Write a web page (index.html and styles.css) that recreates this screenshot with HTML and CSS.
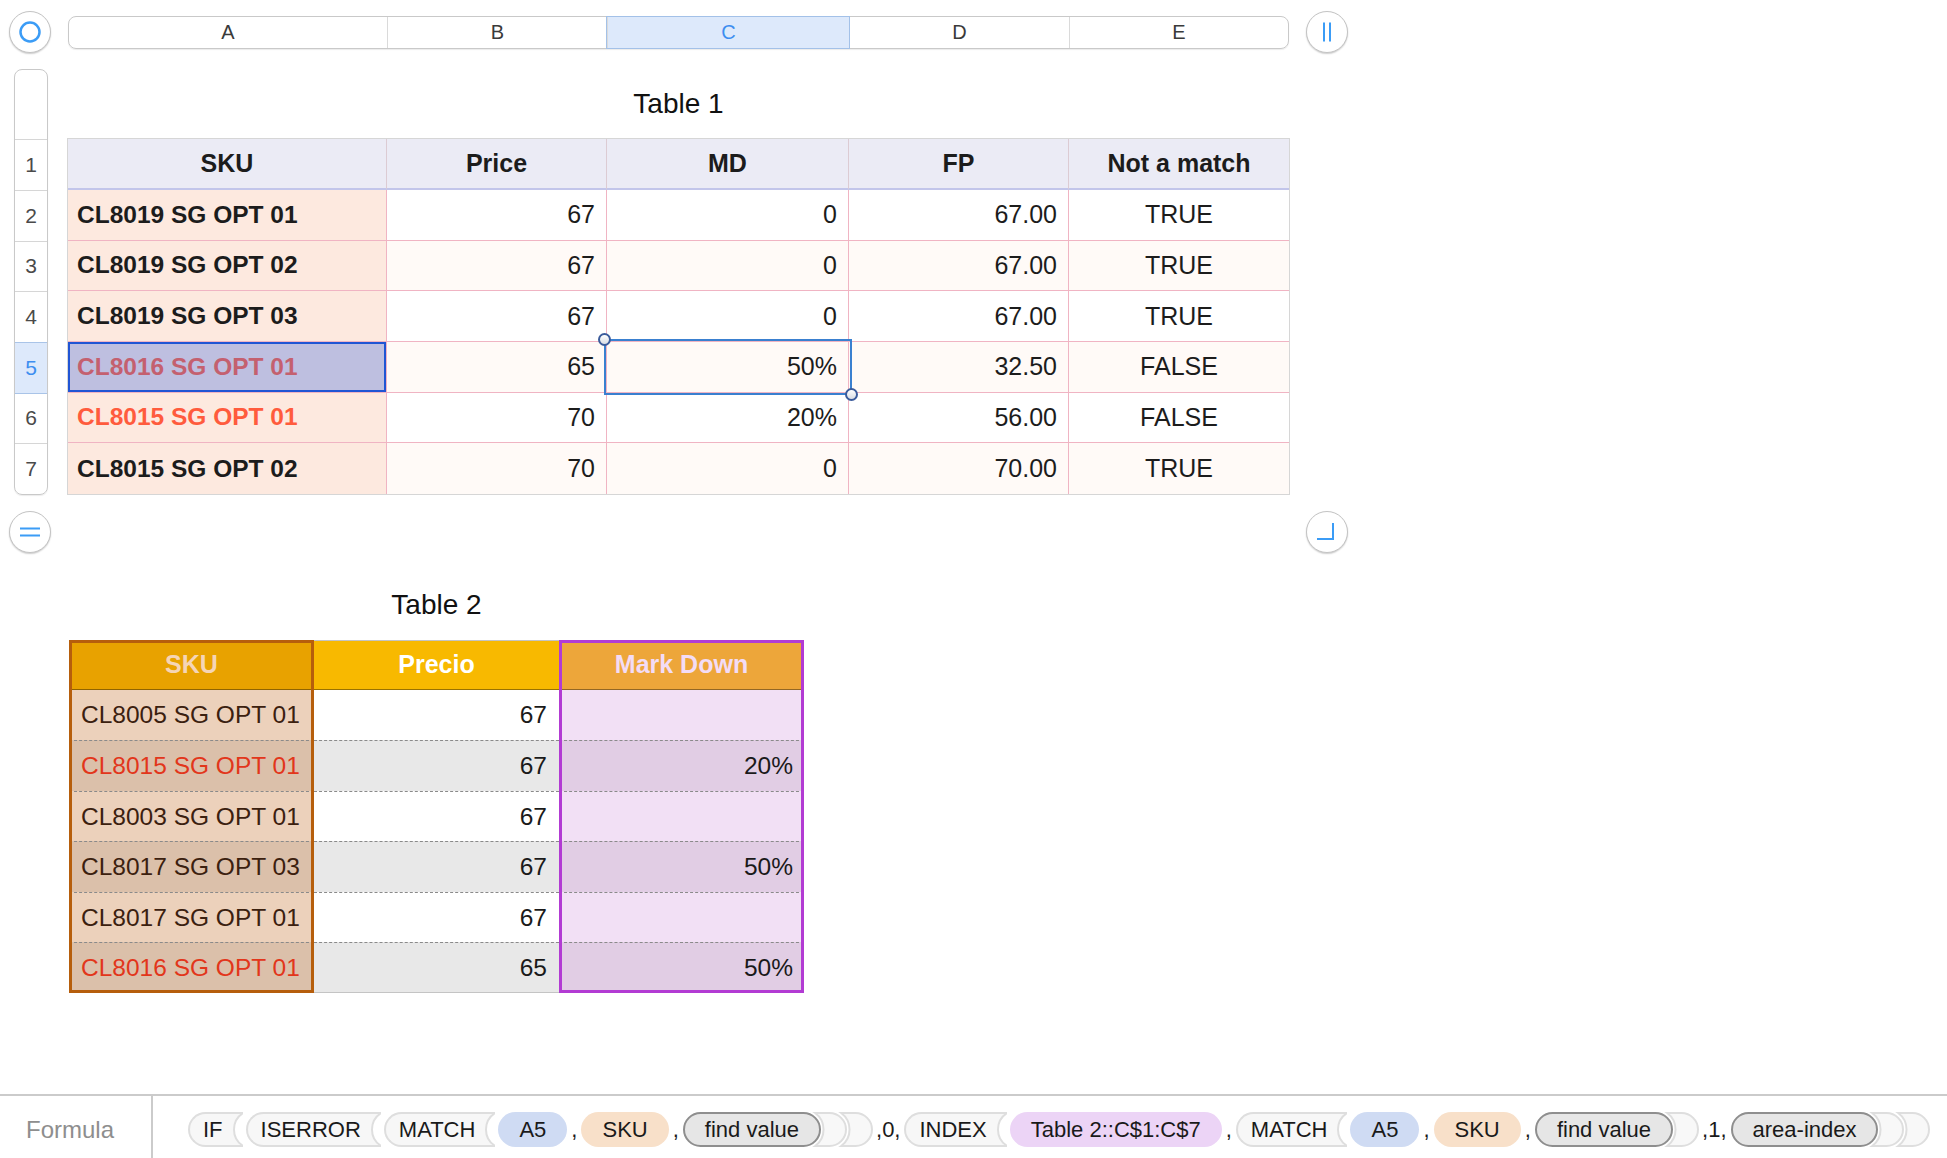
FILE: index.html
```html
<!DOCTYPE html>
<html lang="en">
<head>
<meta charset="utf-8">
<title>Numbers – Table 1</title>
<link rel="stylesheet" href="styles.css">
</head>
<body>
<div class="app">
  <div class="canvas">
    <div class="top-row">
      <div class="round-btn">
        <svg viewBox="0 0 40 40"><circle cx="20" cy="20" r="9.5" fill="none" stroke="#3b9cf6" stroke-width="2.5"/></svg>
      </div>
      <div class="col-bar">
        <div class="col-cell">A</div>
        <div class="col-cell">B</div>
        <div class="col-cell col-active">C</div>
        <div class="col-cell">D</div>
        <div class="col-cell">E</div>
      </div>
      <div class="round-btn gap-left">
        <svg viewBox="0 0 40 40"><path d="M17 10.5V29.5M23 10.5V29.5" fill="none" stroke="#3b9cf6" stroke-width="2"/></svg>
      </div>
    </div>

    <div class="sheet-row">
      <div class="row-bar">
        <div class="row-blank"></div>
        <div class="row-num row-first">1</div>
        <div class="row-num">2</div>
        <div class="row-num">3</div>
        <div class="row-num">4</div>
        <div class="row-num row-active">5</div>
        <div class="row-num row-after-active">6</div>
        <div class="row-num">7</div>
      </div>

      <div class="table1-block">
        <div class="table-title">Table 1</div>
        <div class="t1">
          <div class="c h">SKU</div>
          <div class="c h">Price</div>
          <div class="c h">MD</div>
          <div class="c h">FP</div>
          <div class="c h last">Not a match</div>

          <div class="c sku">CL8019 SG OPT 01</div>
          <div class="c num">67</div>
          <div class="c num">0</div>
          <div class="c num">67.00</div>
          <div class="c ctr last">TRUE</div>

          <div class="c sku">CL8019 SG OPT 02</div>
          <div class="c num alt">67</div>
          <div class="c num alt">0</div>
          <div class="c num alt">67.00</div>
          <div class="c ctr alt last">TRUE</div>

          <div class="c sku">CL8019 SG OPT 03</div>
          <div class="c num">67</div>
          <div class="c num">0</div>
          <div class="c num">67.00</div>
          <div class="c ctr last">TRUE</div>

          <div class="c sku sel-a">CL8016 SG OPT 01</div>
          <div class="c num alt">65</div>
          <div class="c num alt sel-c">50%
            <div class="sel-rect"><span class="handle tl"></span><span class="handle br"></span></div>
          </div>
          <div class="c num alt">32.50</div>
          <div class="c ctr alt last">FALSE</div>

          <div class="c sku coral">CL8015 SG OPT 01</div>
          <div class="c num">70</div>
          <div class="c num">20%</div>
          <div class="c num">56.00</div>
          <div class="c ctr last">FALSE</div>

          <div class="c sku bottom">CL8015 SG OPT 02</div>
          <div class="c num alt bottom">70</div>
          <div class="c num alt bottom">0</div>
          <div class="c num alt bottom">70.00</div>
          <div class="c ctr alt last bottom">TRUE</div>
        </div>
      </div>
    </div>

    <div class="mid-controls">
      <div class="round-btn">
        <svg viewBox="0 0 40 40"><path d="M10 16.5H30M10 23.5H30" fill="none" stroke="#3b9cf6" stroke-width="2"/></svg>
      </div>
      <div class="round-btn">
        <svg viewBox="0 0 40 40"><path d="M26 11V27H10" fill="none" stroke="#3b9cf6" stroke-width="2"/></svg>
      </div>
    </div>

    <div class="table2-block">
      <div class="table-title">Table 2</div>
      <div class="t2">
        <div class="t2-col sku-col">
          <div class="t2-h">SKU</div>
          <div class="t2-c first">CL8005 SG OPT 01</div>
          <div class="t2-c dark red">CL8015 SG OPT 01</div>
          <div class="t2-c">CL8003 SG OPT 01</div>
          <div class="t2-c dark">CL8017 SG OPT 03</div>
          <div class="t2-c">CL8017 SG OPT 01</div>
          <div class="t2-c dark red">CL8016 SG OPT 01</div>
        </div>
        <div class="t2-col price-col">
          <div class="t2-h">Precio</div>
          <div class="t2-c first">67</div>
          <div class="t2-c dark">67</div>
          <div class="t2-c">67</div>
          <div class="t2-c dark">67</div>
          <div class="t2-c">67</div>
          <div class="t2-c dark last">65</div>
        </div>
        <div class="t2-col md-col">
          <div class="t2-h">Mark Down</div>
          <div class="t2-c first"></div>
          <div class="t2-c dark">20%</div>
          <div class="t2-c"></div>
          <div class="t2-c dark">50%</div>
          <div class="t2-c"></div>
          <div class="t2-c dark">50%</div>
        </div>
      </div>
    </div>
  </div>

  <div class="formula-bar">
    <div class="formula-label">Formula</div>
    <div class="formula-tokens">
      <span class="fn">IF</span><svg class="tail" viewBox="0 0 20 35"><path class="tail-fill" d="M0 1H20A19.6 19.6 0 0 0 20 34H0Z"/><path class="tail-line" d="M0 1H20A19.6 19.6 0 0 0 20 34H0"/></svg>
      <span class="fn">ISERROR</span><svg class="tail" viewBox="0 0 20 35"><path class="tail-fill" d="M0 1H20A19.6 19.6 0 0 0 20 34H0Z"/><path class="tail-line" d="M0 1H20A19.6 19.6 0 0 0 20 34H0"/></svg>
      <span class="fn">MATCH</span><svg class="tail" viewBox="0 0 20 35"><path class="tail-fill" d="M0 1H20A19.6 19.6 0 0 0 20 34H0Z"/><path class="tail-line" d="M0 1H20A19.6 19.6 0 0 0 20 34H0"/></svg>
      <span class="pill ref">A5</span><span class="sep">,</span>
      <span class="pill skuref">SKU</span><span class="sep">,</span>
      <span class="pill ph">find value</span><svg class="cp" viewBox="0 0 44 35"><path d="M12.2 1H26.5A16.5 16.5 0 0 1 26.5 34H12.2A20.5 20.5 0 0 0 12.2 1Z"/></svg><svg class="cp" viewBox="0 0 44 35"><path d="M12.2 1H26.5A16.5 16.5 0 0 1 26.5 34H12.2A20.5 20.5 0 0 0 12.2 1Z"/></svg>
      <span class="sep sep-wide">,0,</span>
      <span class="fn">INDEX</span><svg class="tail" viewBox="0 0 20 35"><path class="tail-fill" d="M0 1H20A19.6 19.6 0 0 0 20 34H0Z"/><path class="tail-line" d="M0 1H20A19.6 19.6 0 0 0 20 34H0"/></svg>
      <span class="pill tbl">Table 2::C$1:C$7</span><span class="sep">,</span>
      <span class="fn">MATCH</span><svg class="tail" viewBox="0 0 20 35"><path class="tail-fill" d="M0 1H20A19.6 19.6 0 0 0 20 34H0Z"/><path class="tail-line" d="M0 1H20A19.6 19.6 0 0 0 20 34H0"/></svg>
      <span class="pill ref">A5</span><span class="sep">,</span>
      <span class="pill skuref">SKU</span><span class="sep">,</span>
      <span class="pill ph">find value</span><svg class="cp" viewBox="0 0 44 35"><path d="M12.2 1H26.5A16.5 16.5 0 0 1 26.5 34H12.2A20.5 20.5 0 0 0 12.2 1Z"/></svg>
      <span class="sep sep-wide">,1,</span>
      <span class="pill ph">area-index</span><svg class="cp" viewBox="0 0 44 35"><path d="M12.2 1H26.5A16.5 16.5 0 0 1 26.5 34H12.2A20.5 20.5 0 0 0 12.2 1Z"/></svg><svg class="cp" viewBox="0 0 44 35"><path d="M12.2 1H26.5A16.5 16.5 0 0 1 26.5 34H12.2A20.5 20.5 0 0 0 12.2 1Z"/></svg>
    </div>
  </div>
</div>
</body>
</html>
```

FILE: styles.css
```css
* { box-sizing: border-box; }

html, body {
  margin: 0;
  padding: 0;
  background: #ffffff;
}

body {
  font-family: "Liberation Sans", Arial, Helvetica, sans-serif;
  color: #1c1c1c;
  width: 1947px;
  height: 1158px;
  overflow: hidden;
}

.app {
  display: flex;
  flex-direction: column;
  height: 1158px;
}

.canvas {
  flex: 1;
  min-height: 0;
}

/* ---------- round buttons ---------- */
.round-btn {
  width: 42px;
  height: 42px;
  flex: none;
  border-radius: 50%;
  border: 1px solid #c4c4c4;
  background: #fff;
  box-shadow: 0 1px 1.5px rgba(0, 0, 0, 0.2);
  display: flex;
  align-items: center;
  justify-content: center;
}

.round-btn svg {
  width: 40px;
  height: 40px;
  display: block;
}

/* ---------- top column header bar ---------- */
.top-row {
  display: flex;
  align-items: center;
  height: 44px;
  margin-top: 10px;
  padding-left: 9px;
}

.col-bar {
  margin-left: 17px;
  width: 1221px;
  height: 33px;
  border: 1px solid #c9c9c9;
  border-radius: 8px;
  box-shadow: 0 1px 1px rgba(0, 0, 0, 0.08);
  display: grid;
  grid-template-columns: 318px 220px 242px 220px 1fr;
}

.col-cell {
  display: flex;
  align-items: center;
  justify-content: center;
  font-size: 20px;
  color: #3a3a3a;
  border-left: 1px solid #dadada;
}

.col-cell:first-child { border-left: none; }

.col-active {
  background: #dde9fb;
  color: #3d8ef0;
  box-shadow: 0 0 0 1px #a3c1e8;
  position: relative;
}

.gap-left { margin-left: 17px; }

/* ---------- row header + table 1 ---------- */
.sheet-row {
  display: flex;
  align-items: flex-start;
  margin-top: 15px;
}

.row-bar {
  margin-left: 14px;
  width: 34px;
  border: 1px solid #c9c9c9;
  border-radius: 8px;
  box-shadow: 0 1px 1px rgba(0, 0, 0, 0.08);
  overflow: hidden;
}

.row-blank { height: 69px; }

.row-num {
  height: 50.667px;
  border-top: 1px solid #d6d6d6;
  display: flex;
  align-items: center;
  justify-content: center;
  font-size: 21px;
  color: #4a4a4a;
}

.row-first { height: 51px; }

.row-active {
  background: #dde9fb;
  color: #3d8ef0;
  border-top-color: #a9c4e8;
}

.row-after-active { border-top-color: #a9c4e8; }

.table1-block {
  margin-left: 20px;
  width: 1221px;
}

.table-title {
  height: 70px;
  display: flex;
  align-items: center;
  justify-content: center;
  font-size: 28px;
  color: #111;
}

.t1 {
  display: grid;
  grid-template-columns: 319px 220px 242px 220px 220px;
  grid-template-rows: 51px repeat(6, 50.667px);
  box-shadow: 0 0 0 1px #d6d6d6;
  background: #fff;
}

.c {
  display: flex;
  align-items: center;
  font-size: 25px;
  color: #1c1c1c;
  padding: 0 11px;
  border-right: 1px solid #f0b4c3;
  border-bottom: 1px solid #f0b4c3;
  background: #ffffff;
  white-space: nowrap;
}

.c.h {
  background: #ebebf5;
  font-weight: bold;
  justify-content: center;
  border-bottom: 2px solid #c2c5ea;
  border-right-color: #dccbd3;
}

.c.last { border-right: none; }
.c.bottom { border-bottom: none; }

.c.sku {
  background: #fde9df;
  font-weight: bold;
  padding-left: 9px;
  font-size: 24.5px;
}

.c.num { justify-content: flex-end; }
.c.ctr { justify-content: center; }
.c.alt { background: #fffaf7; }

.c.sel-a {
  background: #bebfe0;
  color: #c4606f;
  box-shadow: inset 0 0 0 2px #2055d4;
}

.c.coral { color: #ff5b3d; }

.c.sel-c { position: relative; }

.sel-rect {
  position: absolute;
  left: -3px;
  top: -3px;
  right: -4px;
  bottom: -3px;
  border: 2.5px solid #3a80d0;
  z-index: 2;
}

.handle {
  position: absolute;
  width: 13px;
  height: 13px;
  border-radius: 50%;
  border: 2px solid #3b5b9b;
  background: linear-gradient(#ffffff, #d9dce3);
}

.handle.tl { left: -8px; top: -8px; }
.handle.br { right: -8px; bottom: -8px; }

/* ---------- middle controls ---------- */
.mid-controls {
  display: flex;
  justify-content: space-between;
  width: 1339px;
  margin-left: 9px;
  margin-top: 16px;
}

/* ---------- table 2 ---------- */
.table2-block {
  margin-top: 17px;
  margin-left: 69px;
  width: 735px;
}

.t2 { display: flex; }

.t2-col {
  width: 245px;
  display: flex;
  flex-direction: column;
}

.sku-col {
  outline: 3px solid #b65e0c;
  outline-offset: -3px;
}

.md-col {
  outline: 3px solid #b23bd3;
  outline-offset: -3px;
}

.t2-h {
  height: 50px;
  display: flex;
  align-items: center;
  justify-content: center;
  font-size: 25px;
  font-weight: bold;
  border-bottom: 1px solid rgba(0, 0, 0, 0.38);
}

.t2-c {
  height: 50.5px;
  display: flex;
  align-items: center;
  font-size: 24.5px;
  color: #1a1a1a;
  border-top: 1px dashed #8a8a8a;
  white-space: nowrap;
}

.t2-c.first { border-top: none; }

.sku-col .t2-h { background: #e8a200; color: #f5d5b6; }
.sku-col .t2-c { background: #ecd1bb; color: #3b200f; padding-left: 12px; }
.sku-col .t2-c.dark { background: #dbc0aa; }
.sku-col .t2-c.red { color: #e2361b; }

.price-col .t2-h {
  background: #f8b900;
  color: #ffffff;
  box-shadow: inset 0 1px 0 #c4c4c4;
}
.price-col .t2-c { background: #ffffff; justify-content: flex-end; padding-right: 12px; }
.price-col .t2-c.dark { background: #e8e8e8; }
.price-col .t2-c.last { box-shadow: inset 0 -1px 0 #c4c4c4; }

.md-col .t2-h { background: #eda63a; color: #f3dcf6; }
.md-col .t2-c { background: #f2e0f5; justify-content: flex-end; padding-right: 11px; }
.md-col .t2-c.dark { background: #e1cde4; }

/* ---------- formula bar ---------- */
.formula-bar {
  height: 64px;
  flex: none;
  border-top: 2px solid #cbcbcb;
  display: flex;
}

.formula-label {
  width: 153px;
  flex: none;
  border-right: 2px solid #cbcbcb;
  font-size: 24px;
  color: #8e8e8e;
  padding-left: 26px;
  padding-top: 20px;
}

.formula-tokens {
  display: flex;
  align-items: center;
  height: 35px;
  margin-top: 16px;
  padding-left: 35px;
  font-size: 22px;
  color: #1a1a1a;
  white-space: nowrap;
}

.fn {
  height: 35px;
  display: flex;
  align-items: center;
  flex: none;
  background: #f7f7f7;
  border: 2px solid #dedede;
  border-right: none;
  border-radius: 18px 0 0 18px;
  padding-left: 13px;
}

.tail {
  width: 20px;
  height: 35px;
  flex: none;
  display: block;
  margin-right: 3px;
}

.tail-fill { fill: #f7f7f7; }
.tail-line { fill: none; stroke: #dedede; stroke-width: 2; }

.pill {
  height: 35px;
  display: flex;
  align-items: center;
  flex: none;
  border-radius: 18px;
  padding: 0 21px;
}

.ref { background: #cfdbf3; }
.skuref { background: #f8e0c9; }
.tbl { background: #ecd4f6; }

.ph {
  background: #e6e6e6;
  border: 2px solid #8e8e8e;
  padding: 0 20px;
}

.cp {
  width: 44px;
  height: 35px;
  flex: none;
  display: block;
  margin-left: -18px;
}

.cp path {
  fill: #f8f8f8;
  stroke: #dedede;
  stroke-width: 2;
}

.sep {
  padding: 0 4px;
  flex: none;
  line-height: 35px;
}

.sep-wide { padding: 0 4px 0 3px; }
```
